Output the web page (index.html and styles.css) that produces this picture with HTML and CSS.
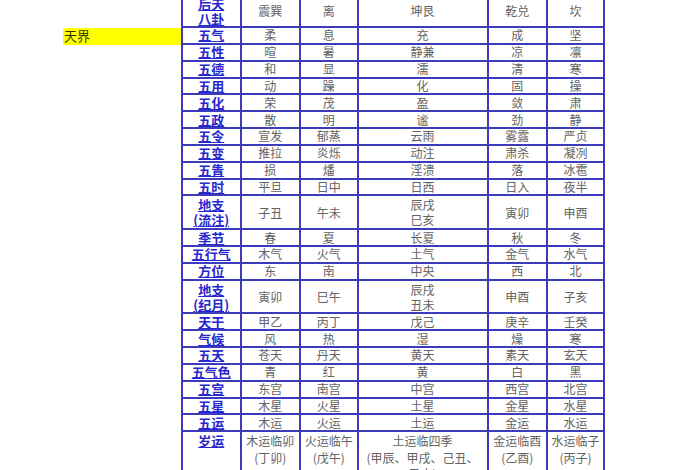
FILE: index.html
```html
<!DOCTYPE html>
<html>
<head>
<meta charset="utf-8">
<link rel="stylesheet" href="styles.css">
</head>
<body>
<div class="sheet">
  <div class="k top dbl">后天<br>八卦</div><div class="c top">震巽</div><div class="c top">离</div><div class="c top">坤艮</div><div class="c top">乾兑</div><div class="c top">坎</div>
  <div class="hl">天界</div>
  <div class="k">五气</div><div class="c">柔</div><div class="c">息</div><div class="c">充</div><div class="c">成</div><div class="c">坚</div>
  <div class="k">五性</div><div class="c">暄</div><div class="c">暑</div><div class="c">静兼</div><div class="c">凉</div><div class="c">凛</div>
  <div class="k">五德</div><div class="c">和</div><div class="c">显</div><div class="c">濡</div><div class="c">清</div><div class="c">寒</div>
  <div class="k">五用</div><div class="c">动</div><div class="c">躁</div><div class="c">化</div><div class="c">固</div><div class="c">操</div>
  <div class="k">五化</div><div class="c">荣</div><div class="c">茂</div><div class="c">盈</div><div class="c">敛</div><div class="c">肃</div>
  <div class="k">五政</div><div class="c">散</div><div class="c">明</div><div class="c">谧</div><div class="c">劲</div><div class="c">静</div>
  <div class="k">五令</div><div class="c">宣发</div><div class="c">郁蒸</div><div class="c">云雨</div><div class="c">雾露</div><div class="c">严贞</div>
  <div class="k">五变</div><div class="c">推拉</div><div class="c">炎烁</div><div class="c">动注</div><div class="c">肃杀</div><div class="c">凝冽</div>
  <div class="k">五眚</div><div class="c">损</div><div class="c">燔</div><div class="c">淫溃</div><div class="c">落</div><div class="c">冰雹</div>
  <div class="k">五时</div><div class="c">平旦</div><div class="c">日中</div><div class="c">日西</div><div class="c">日入</div><div class="c">夜半</div>
  <div class="k dbl">地支<br>(流注)</div><div class="c dbl">子丑</div><div class="c dbl">午未</div><div class="c dbl">辰戌<br>巳亥</div><div class="c dbl">寅卯</div><div class="c dbl">申酉</div>
  <div class="k">季节</div><div class="c">春</div><div class="c">夏</div><div class="c">长夏</div><div class="c">秋</div><div class="c">冬</div>
  <div class="k">五行气</div><div class="c">木气</div><div class="c">火气</div><div class="c">土气</div><div class="c">金气</div><div class="c">水气</div>
  <div class="k">方位</div><div class="c">东</div><div class="c">南</div><div class="c">中央</div><div class="c">西</div><div class="c">北</div>
  <div class="k dbl">地支<br>(纪月)</div><div class="c dbl">寅卯</div><div class="c dbl">巳午</div><div class="c dbl">辰戌<br>丑未</div><div class="c dbl">申酉</div><div class="c dbl">子亥</div>
  <div class="k">天干</div><div class="c">甲乙</div><div class="c">丙丁</div><div class="c">戊己</div><div class="c">庚辛</div><div class="c">壬癸</div>
  <div class="k">气候</div><div class="c">风</div><div class="c">热</div><div class="c">湿</div><div class="c">燥</div><div class="c">寒</div>
  <div class="k">五天</div><div class="c">苍天</div><div class="c">丹天</div><div class="c">黄天</div><div class="c">素天</div><div class="c">玄天</div>
  <div class="k">五气色</div><div class="c">青</div><div class="c">红</div><div class="c">黄</div><div class="c">白</div><div class="c">黑</div>
  <div class="k">五宫</div><div class="c">东宫</div><div class="c">南宫</div><div class="c">中宫</div><div class="c">西宫</div><div class="c">北宫</div>
  <div class="k">五星</div><div class="c">木星</div><div class="c">火星</div><div class="c">土星</div><div class="c">金星</div><div class="c">水星</div>
  <div class="k">五运</div><div class="c">木运</div><div class="c">火运</div><div class="c">土运</div><div class="c">金运</div><div class="c">水运</div>
  <div class="k last">岁运</div><div class="c last">木运临卯<br>(丁卯)</div><div class="c last">火运临午<br>(戊午)</div><div class="c last">土运临四季<br>(甲辰、甲戌、己丑、<br>己未)</div><div class="c last">金运临酉<br>(乙酉)</div><div class="c last">水运临子<br>(丙子)</div>
</div>
</body>
</html>
```
FILE: styles.css
```css
html, body {
  margin: 0;
  padding: 0;
  background: #ffffff;
  overflow: hidden;
  width: 700px;
  height: 470px;
}

.sheet {
  display: grid;
  grid-template-columns: 63px 118px 60.5px 59.5px 57.5px 130px 59.5px 57px;
  grid-template-rows: 34px repeat(10, 16.85px) 33.7px repeat(3, 16.85px) 33.7px repeat(7, 16.85px) 60px;
  margin-top: -6px;
  font-family: "Noto Sans CJK SC", "Noto Sans", sans-serif;
}

.k, .c {
  box-sizing: border-box;
  border-right: 2px solid #3b3bbb;
  border-bottom: 2px solid #3b3bbb;
  display: flex;
  align-items: center;
  justify-content: center;
  text-align: center;
  white-space: nowrap;
}

.k {
  grid-column: 3;
  border-left: 2px solid #3b3bbb;
  color: #2727cf;
  font-weight: 700;
  font-size: 13px;
  line-height: 14px;
  text-decoration: underline;
  text-decoration-thickness: 1px;
  text-underline-offset: 1px;
}

.c {
  color: #636363;
  font-size: 12px;
  line-height: 14px;
}

.dbl {
  line-height: 15px;
}

.top {
  border-top: 2px solid #3b3bbb;
}

.last {
  align-items: flex-start;
  padding-top: 1px;
  line-height: 16.5px;
}

.hl {
  grid-column: 2;
  background: #ffff00;
  color: #333300;
  font-size: 13px;
  line-height: 14px;
  padding-left: 1px;
  display: flex;
  align-items: center;
}
```
